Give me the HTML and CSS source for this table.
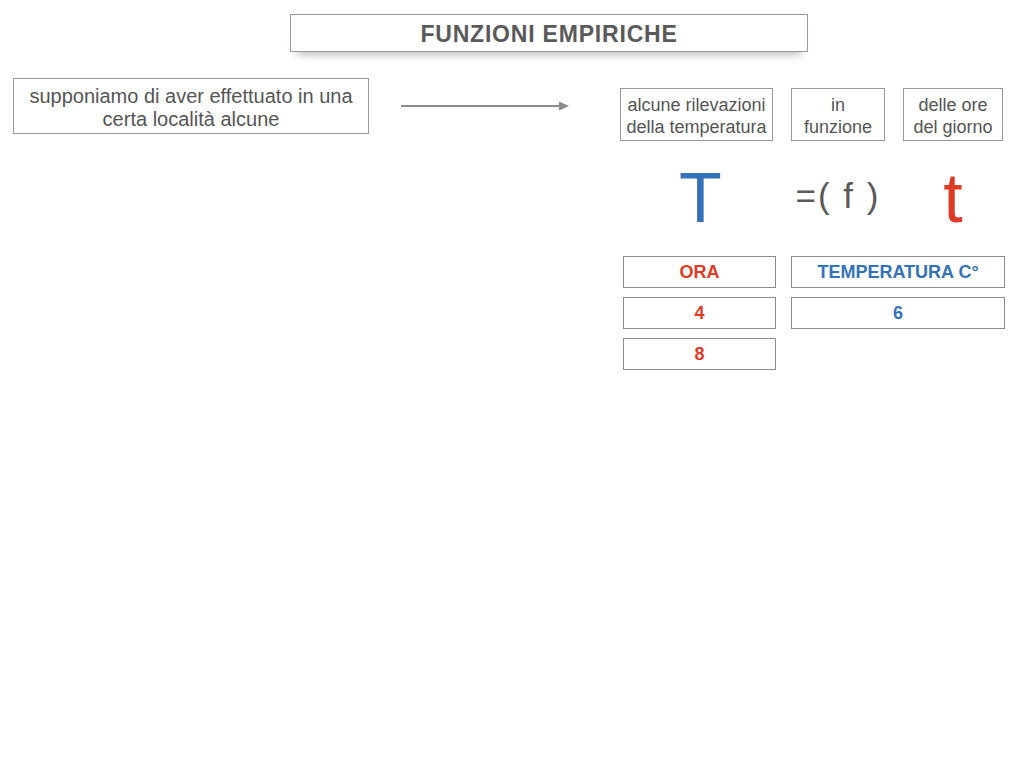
FILE: index.html
```html
<!DOCTYPE html>
<html lang="it">
<head>
<meta charset="utf-8">
<title>Funzioni empiriche</title>
<link rel="stylesheet" href="styles.css">
</head>
<body>
<div class="page">
  <div class="title">FUNZIONI EMPIRICHE</div>
  <div class="main">
    <div class="left">
      <div class="note">supponiamo di aver effettuato in una<br>certa località alcune</div>
      <svg class="arrow" width="170" height="10" viewBox="0 0 170 10">
        <line x1="0" y1="5" x2="160" y2="5" stroke="#8c8c8c" stroke-width="2"/>
        <polygon points="158,0.5 168,5 158,9.5" fill="#8c8c8c"/>
      </svg>
    </div>
    <div class="right">
      <div class="labels">
        <div class="label w1">alcune rilevazioni<br>della temperatura</div>
        <div class="label w2">in<br>funzione</div>
        <div class="label w3">delle ore<br>del giorno</div>
      </div>
      <div class="formula">
        <div class="big blue w1">T</div>
        <div class="eq w2">=( f )</div>
        <div class="big red w3">t</div>
      </div>
      <div class="table">
        <div class="cell red">ORA</div>
        <div class="cell blue">TEMPERATURA C°</div>
        <div class="cell red">4</div>
        <div class="cell blue">6</div>
        <div class="cell red">8</div>
      </div>
    </div>
  </div>
</div>
</body>
</html>
```

FILE: styles.css
```css
html, body {
  margin: 0;
  padding: 0;
  background: #ffffff;
}
body {
  font-family: "Liberation Sans", Arial, Helvetica, sans-serif;
  color: #555555;
}
.page {
  width: 1024px;
  height: 768px;
  padding-top: 14px;
  box-sizing: border-box;
}
.title {
  margin-left: 290px;
  width: 518px;
  height: 38px;
  box-sizing: border-box;
  border: 1px solid #999999;
  background: #fff;
  box-shadow: 0 9px 10px -7px rgba(0, 0, 0, 0.3);
  font-weight: bold;
  font-size: 23px;
  letter-spacing: 0.8px;
  line-height: 38px;
  text-align: center;
  color: #5a5a5a;
}
.main {
  display: flex;
  margin-top: 26px;
}
.left {
  display: flex;
  align-items: flex-start;
  margin-left: 13px;
}
.note {
  width: 356px;
  height: 56px;
  box-sizing: border-box;
  border: 1px solid #999999;
  font-size: 20px;
  line-height: 23px;
  padding-top: 6px;
  text-align: center;
}
.arrow {
  margin-left: 32px;
  margin-top: 23px;
}
.right {
  margin-left: 49px;
  margin-top: 10px;
}
.labels, .formula {
  display: flex;
  gap: 18px;
}
.w1 { width: 153px; }
.w2 { width: 94px; }
.w3 { width: 100px; }
.label {
  height: 53px;
  box-sizing: border-box;
  border: 1px solid #999999;
  font-size: 18px;
  line-height: 22px;
  padding-top: 5px;
  text-align: center;
}
.formula {
  margin-top: 22px;
  height: 70px;
}
.big {
  font-size: 70px;
  line-height: 70px;
  text-align: center;
}
.formula .blue { padding-left: 8px; box-sizing: border-box; }
.eq {
  font-size: 35px;
  line-height: 35px;
  padding-top: 15px;
  letter-spacing: 2px;
  text-align: center;
  color: #5a5a5a;
}
.blue { color: #3372b8; }
.red { color: #de3b27; }
.table {
  display: grid;
  grid-template-columns: 153px 214px;
  column-gap: 15px;
  row-gap: 9px;
  margin-top: 23px;
  margin-left: 3px;
}
.cell {
  height: 32px;
  box-sizing: border-box;
  border: 1px solid #8c8c8c;
  font-weight: bold;
  font-size: 18px;
  line-height: 30px;
  text-align: center;
}
```
